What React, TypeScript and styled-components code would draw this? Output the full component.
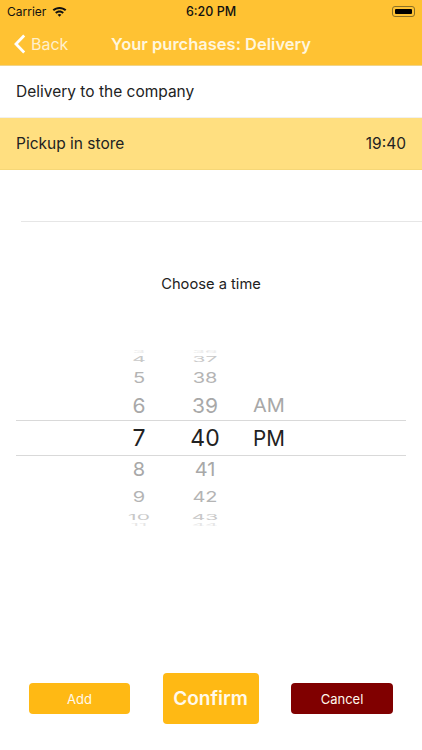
import styled, { createGlobalStyle } from "styled-components";

const GlobalStyle = createGlobalStyle`
  html, body {
    margin: 0;
    padding: 0;
    background: #ffffff;
  }
  body {
    font-family: Inter, "Liberation Sans", sans-serif;
    color: #222222;
  }
  * {
    box-sizing: border-box;
  }
`;

const wheelRows = [
  { height: 3, size: 20, squash: 0.2, color: "#e6e6e6", hour: "3", minute: "36", period: "" },
  { height: 12, size: 21, squash: 0.36, color: "#c8c8c8", hour: "4", minute: "37", period: "" },
  { height: 26, size: 20, squash: 0.72, color: "#b4b4b4", hour: "5", minute: "38", period: "" },
  { height: 29, size: 21, squash: 0.96, color: "#a8a8a8", hour: "6", minute: "39", period: "AM" },
  { height: 27, size: 20, squash: 0.96, color: "#a8a8a8", hour: "8", minute: "41", period: "" },
  { height: 28, size: 20, squash: 0.74, color: "#b4b4b4", hour: "9", minute: "42", period: "" },
  { height: 12, size: 21, squash: 0.36, color: "#c8c8c8", hour: "10", minute: "43", period: "" },
  { height: 4, size: 20, squash: 0.2, color: "#e6e6e6", hour: "11", minute: "44", period: "" },
];

function WheelLine({ row }: { row: (typeof wheelRows)[number] }) {
  return (
    <St.WheelRow $height={row.height} $size={row.size} $squash={row.squash} $color={row.color}>
      <span>{row.hour}</span>
      <span>{row.minute}</span>
      <St.Period>{row.period}</St.Period>
    </St.WheelRow>
  );
}

export default function App() {
  return (
    <St.Page>
      <GlobalStyle />
      <St.Header>
        <St.StatusBar>
          <St.Carrier>
            Carrier
            <svg width="15" height="11" viewBox="0 0 15 11">
              <path d="M0.6 3.6C4.4 0 10.6 0 14.4 3.6L13 5.1C10 2.3 5 2.3 2 5.1Z" fill="#111" />
              <path d="M3.1 6.2C5.6 3.9 9.4 3.9 11.9 6.2L10.5 7.7C8.8 6.2 6.2 6.2 4.5 7.7Z" fill="#111" />
              <path d="M5.6 8.7C6.6 7.9 8.4 7.9 9.4 8.7L7.5 10.8Z" fill="#111" />
            </svg>
          </St.Carrier>
          <St.Clock>6:20 PM</St.Clock>
          <St.Battery>
            <St.BatteryFill />
          </St.Battery>
        </St.StatusBar>
        <St.NavBar>
          <St.BackLink>
            <svg width="12" height="20" viewBox="0 0 12 20">
              <path d="M10.2 1.6L2 10L10.2 18.4" fill="none" stroke="#fff" strokeWidth="2.8" />
            </svg>
            Back
          </St.BackLink>
          <St.NavTitle>Your purchases: Delivery</St.NavTitle>
        </St.NavBar>
      </St.Header>

      <St.OptionRow>
        <span>Delivery to the company</span>
      </St.OptionRow>
      <St.OptionRow $selected>
        <span>Pickup in store</span>
        <span>19:40</span>
      </St.OptionRow>
      <St.EmptyRow />

      <St.Prompt>Choose a time</St.Prompt>

      <St.Wheel>
        {wheelRows.slice(0, 4).map((row) => (
          <WheelLine key={row.hour} row={row} />
        ))}
        <St.WheelCurrent>
          <span>7</span>
          <span>40</span>
          <St.CurrentPeriod>PM</St.CurrentPeriod>
        </St.WheelCurrent>
        {wheelRows.slice(4).map((row) => (
          <WheelLine key={row.hour} row={row} />
        ))}
      </St.Wheel>

      <St.Actions>
        <St.ActionButton $width={101} $height={31} $color="#ffb914" $size={13}>
          Add
        </St.ActionButton>
        <St.ActionButton $width={96} $height={51} $color="#ffb914" $size={19} $bold>
          Confirm
        </St.ActionButton>
        <St.ActionButton $width={102} $height={31} $color="#800000" $size={13}>
          Cancel
        </St.ActionButton>
      </St.Actions>
    </St.Page>
  );
}

const St = {
  Page: styled.main`
    width: 422px;
    height: 750px;
    overflow: hidden;
    display: flex;
    flex-direction: column;
    background: #ffffff;
  `,
  Header: styled.header`
    height: 66px;
    background-color: #ffc233;
    border-bottom: 1px solid #f0d48a;
  `,
  StatusBar: styled.div`
    height: 22px;
    padding: 0 7px;
    display: grid;
    grid-template-columns: 1fr auto 1fr;
    align-items: center;
    color: #111111;
    font-size: 12px;
  `,
  Carrier: styled.div`
    display: flex;
    align-items: center;
    gap: 6px;
  `,
  Clock: styled.div`
    font-weight: 500;
    font-size: 12.5px;
  `,
  Battery: styled.div`
    justify-self: end;
    width: 23px;
    height: 11px;
    padding: 2px;
    border: 1px solid #8a7126;
    border-radius: 3px;
  `,
  BatteryFill: styled.div`
    width: 100%;
    height: 100%;
    border-radius: 1px;
    background-color: #000000;
  `,
  NavBar: styled.nav`
    height: 43px;
    padding: 0 0 0 14px;
    display: flex;
    align-items: center;
    color: #ffffff;
  `,
  BackLink: styled.div`
    width: 97px;
    display: flex;
    align-items: center;
    gap: 5px;
    font-size: 16px;
    color: #fff0cc;
  `,
  NavTitle: styled.h1`
    margin: 0;
    font-size: 16.5px;
    font-weight: 600;
    color: #fff6dd;
  `,
  OptionRow: styled.div<{ $selected?: boolean }>`
    height: 52px;
    padding: 0 16px;
    display: flex;
    align-items: center;
    justify-content: space-between;
    font-size: 15.5px;
    background-color: ${({ $selected }) => ($selected ? "#ffdf80" : "#ffffff")};
    border-bottom: 1px solid ${({ $selected }) => ($selected ? "#f6d777" : "#f0f0f0")};
  `,
  EmptyRow: styled.div`
    height: 52px;
    margin-left: 21px;
    border-bottom: 1px solid #e6e6e6;
  `,
  Prompt: styled.p`
    margin: 52px 0 0;
    height: 20px;
    line-height: 20px;
    text-align: center;
    font-size: 14.7px;
    color: #222222;
  `,
  Wheel: styled.div`
    margin: 56px 16px 0;
    height: 177px;
    overflow: hidden;
  `,
  WheelRow: styled.div<{ $height: number; $size: number; $squash: number; $color: string }>`
    height: ${({ $height }) => $height}px;
    padding-left: 93px;
    display: grid;
    grid-template-columns: 60px 72px 56px;
    align-items: center;
    text-align: center;
    overflow: hidden;
    line-height: ${({ $height }) => $height}px;
    font-size: ${({ $size }) => $size}px;
    color: ${({ $color }) => $color};

    span {
      display: block;
      transform: scaleY(${({ $squash }) => $squash});
    }
  `,
  Period: styled.span`
    font-size: 20px;
  `,
  CurrentPeriod: styled.span`
    font-size: 22px;
    transform: scaleX(0.94);
  `,
  WheelCurrent: styled.div`
    height: 36px;
    padding-left: 93px;
    display: grid;
    grid-template-columns: 60px 72px 56px;
    align-items: center;
    text-align: center;
    font-size: 23px;
    color: #222222;
    border-top: 1px solid #d9d9d9;
    border-bottom: 1px solid #d9d9d9;
  `,
  Actions: styled.div`
    margin-top: 146px;
    height: 51px;
    padding: 0 29px;
    display: flex;
    align-items: center;
    justify-content: space-between;
  `,
  ActionButton: styled.button<{ $width: number; $height: number; $color: string; $size: number; $bold?: boolean }>`
    width: ${({ $width }) => $width}px;
    height: ${({ $height }) => $height}px;
    padding: 0;
    border: none;
    border-radius: 4px;
    font-family: inherit;
    font-size: ${({ $size }) => $size}px;
    font-weight: ${({ $bold }) => ($bold ? 600 : 400)};
    color: #fff9ec;
    background-color: ${({ $color }) => $color};
  `,
};
